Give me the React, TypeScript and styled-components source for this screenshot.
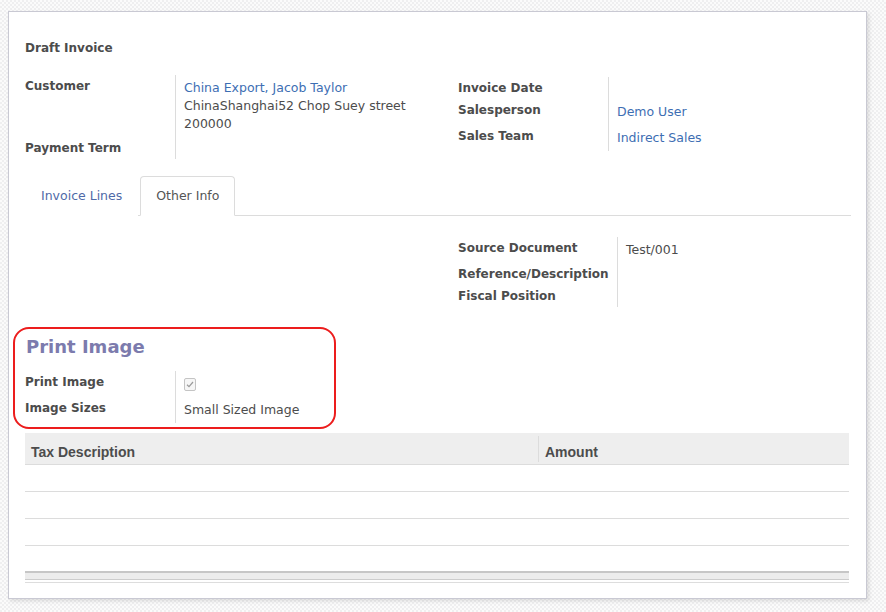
import React from "react";
import styled, { createGlobalStyle } from "styled-components";

const Global = createGlobalStyle`
  html, body { margin: 0; padding: 0; }
  body {
    min-height: 612px;
    background: repeating-conic-gradient(#efeff0 0% 25%, #fbfbfb 0% 50%) 0 0 / 4px 4px;
    font-family: "DejaVu Sans", Verdana, sans-serif;
    font-size: 12.5px;
    color: #4c4c4c;
  }
  #root { padding: 11px 0 0 8px; }
`;

const Sheet = styled.div`
  box-sizing: border-box;
  width: 859px;
  height: 588px;
  background: #fff;
  border: 1px solid #c9c9d3;
  box-shadow: 2px 2px 4px rgba(0, 0, 0, 0.12);
  padding: 27px 15px 0 16px;
`;

const Title = styled.div`
  font-weight: bold;
  font-size: 12px;
  line-height: 18px;
  margin-bottom: 18px;
`;

const Columns = styled.div`
  display: grid;
  grid-template-columns: 433px 1fr;
  align-items: start;
`;

const Fields = styled.div<{ $label: number; $offset?: number }>`
  display: grid;
  grid-template-columns: ${(p) => p.$label}px 1fr;
  line-height: 18px;
  margin-top: ${(p) => p.$offset ?? 0}px;
`;

const Label = styled.div`
  font-weight: bold;
  font-size: 12px;
  padding: 2px 0;
`;

const Value = styled.div`
  border-left: 1px solid #dcdcdc;
  padding: 4px 0 4px 8px;
  min-height: 14px;
`;

const Link = styled.a`
  color: #3d6eb3;
  text-decoration: none;
`;

const Tabs = styled.div`
  display: flex;
  border-bottom: 1px solid #dcdcdc;
  margin-top: 17px;
`;

const Tab = styled.div<{ $active?: boolean }>`
  padding: 10px 15px;
  margin-right: 2px;
  margin-bottom: -1px;
  line-height: 18px;
  border: 1px solid ${(p) => (p.$active ? "#dcdcdc" : "transparent")};
  border-bottom-color: ${(p) => (p.$active ? "#fff" : "transparent")};
  border-radius: 4px 4px 0 0;
  background: #fff;
  color: ${(p) => (p.$active ? "#555" : "#4f6aa8")};
`;

const TabBody = styled.div`
  padding-top: 21px;
`;

const Section = styled.div`
  position: relative;
  margin-top: 28px;
`;

const Heading = styled.div`
  font-size: 18px;
  font-weight: bold;
  color: #7c7bad;
  line-height: 24px;
  margin: 0 0 12px 1px;
`;

const Annotation = styled.div`
  position: absolute;
  left: -12px;
  top: -8px;
  width: 323px;
  height: 102px;
  box-sizing: border-box;
  border: 2px solid #ec1d1d;
  border-radius: 16px;
  pointer-events: none;
`;

const Check = styled.span`
  display: inline-flex;
  align-items: center;
  justify-content: center;
  box-sizing: border-box;
  width: 12px;
  height: 13px;
  margin-top: 3px;
  border: 1px solid #c4c4c4;
  border-radius: 2px;
  background: #f6f6f6;
  vertical-align: top;
`;

const Table = styled.div`
  margin-top: 10px;
  margin-right: 2px;
`;

const HeadRow = styled.div`
  display: grid;
  grid-template-columns: 513px 1fr;
  background: #eeeeee;
  border-bottom: 1px solid #dcdcdc;
  height: 31px;
`;

const HeadCell = styled.div<{ $divider?: boolean }>`
  font-family: "Liberation Sans", Arial, sans-serif;
  font-weight: bold;
  font-size: 14px;
  color: #4c4c4c;
  margin: 3px 0 2px;
  padding: 8px 0 0 6px;
  border-left: ${(p) => (p.$divider ? "1px solid #dcdcdc" : "none")};
`;

const BodyRow = styled.div<{ $last?: boolean }>`
  height: ${(p) => (p.$last ? 25 : 26)}px;
  border-bottom: ${(p) => (p.$last ? "none" : "1px solid #dcdcdc")};
`;

const Footer = styled.div`
  border-top: 2px solid #c6c6c6;
  background: #ececec;
  height: 6px;
  border-bottom: 1px solid #cccccc;
`;

const FooterLine = styled.div`
  margin-top: 2px;
  border-top: 1px solid #dddddd;
`;

export default function App() {
  const rows = [0, 1, 2, 3];
  return (
    <>
      <Global />
      <Sheet>
        <Title>Draft Invoice</Title>
        <Columns>
          <Fields $label={150}>
            <Label>Customer</Label>
            <Value>
              <Link href="#">China Export, Jacob Taylor</Link>
              <div>ChinaShanghai52 Chop Suey street</div>
              <div>200000</div>
            </Value>
            <Label>Payment Term</Label>
            <Value />
          </Fields>
          <Fields $label={150} $offset={2}>
            <Label>Invoice Date</Label>
            <Value />
            <Label>Salesperson</Label>
            <Value>
              <Link href="#">Demo User</Link>
            </Value>
            <Label>Sales Team</Label>
            <Value>
              <Link href="#">Indirect Sales</Link>
            </Value>
          </Fields>
        </Columns>

        <Tabs>
          <Tab>Invoice Lines</Tab>
          <Tab $active>Other Info</Tab>
        </Tabs>

        <TabBody>
          <Columns>
            <div />
            <Fields $label={159}>
              <Label>Source Document</Label>
              <Value>Test/001</Value>
              <Label>Reference/Description</Label>
              <Value />
              <Label>Fiscal Position</Label>
              <Value />
            </Fields>
          </Columns>

          <Section>
            <Annotation />
            <Heading>Print Image</Heading>
            <Fields $label={150}>
              <Label>Print Image</Label>
              <Value>
                <Check>
                  <svg width="8" height="7" viewBox="0 0 8 7">
                    <path d="M1 3.8 L3 5.6 L7 1" fill="none" stroke="#9a9a9a" strokeWidth="1.2" />
                  </svg>
                </Check>
              </Value>
              <Label>Image Sizes</Label>
              <Value>Small Sized Image</Value>
            </Fields>
          </Section>

          <Table>
            <HeadRow>
              <HeadCell>Tax Description</HeadCell>
              <HeadCell $divider>Amount</HeadCell>
            </HeadRow>
            {rows.map((r) => (
              <BodyRow key={r} $last={r === rows.length - 1} />
            ))}
            <Footer />
            <FooterLine />
          </Table>
        </TabBody>
      </Sheet>
    </>
  );
}
